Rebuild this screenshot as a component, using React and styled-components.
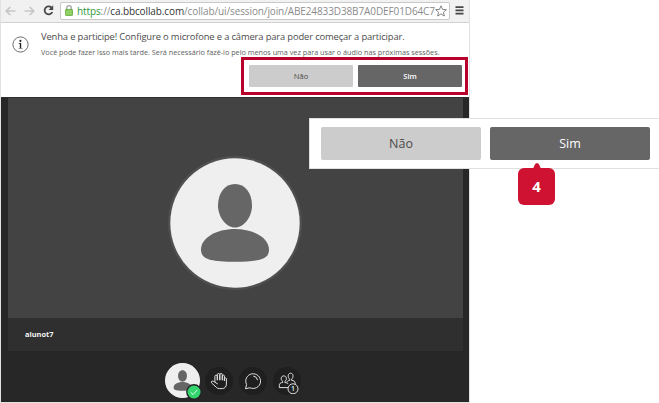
import React from 'react';
import styled, { createGlobalStyle } from 'styled-components';

const GlobalStyle = createGlobalStyle`
  * { box-sizing: border-box; }
  body {
    margin: 0;
    background: #fff;
    font-family: 'Open Sans', 'Noto Sans', sans-serif;
    overflow: hidden;
  }
  svg { display: block; flex: none; }
`;

const Page = styled.main`
  position: relative;
  width: 659px;
  height: 403px;
  overflow: hidden;
`;

const BrowserWindow = styled.section`
  display: flex;
  flex-direction: column;
  width: 470px;
  height: 403px;
  border: 1px solid #e2e2e2;
  border-top: 0;
`;

const Toolbar = styled.header`
  display: flex;
  align-items: center;
  height: 23px;
  padding: 0 5px 1px 4px;
  background: #f1f1f1;
  border-bottom: 1px solid #d2d2d2;
`;

const NavIcons = styled.div`
  display: flex;
  align-items: center;
  gap: 8px;
  width: 55px;
`;

const AddressBar = styled.div`
  display: flex;
  align-items: center;
  width: 390px;
  height: 18px;
  margin-right: 5px;
  padding: 0 2px 0 4px;
  background: #fff;
  border: 1px solid #c9c9c9;
  border-radius: 2px;
`;

const Url = styled.div`
  flex: 1;
  min-width: 0;
  margin-left: 4px;
  white-space: nowrap;
  font-size: 10px;
  line-height: 16px;
  letter-spacing: -0.11px;
  color: #8b8b8b;
`;

const Scheme = styled.span`
  color: #2d9a36;
`;

const Host = styled.span`
  color: #333;
`;

const Notice = styled.section`
  display: flex;
  height: 74px;
  padding-left: 11px;
  background: #fff;
`;

const NoticeIcon = styled.div`
  width: 29px;
  padding-top: 13px;
`;

const NoticeBody = styled.div`
  display: flex;
  flex: 1;
  flex-direction: column;
  white-space: nowrap;
`;

const NoticeTitle = styled.h1`
  margin: 7px 0 0;
  font-size: 9.4px;
  font-weight: 400;
  line-height: 14px;
  letter-spacing: -0.14px;
  color: #4c4c4c;
`;

const NoticeText = styled.p`
  margin: 3px 0 0;
  font-size: 7.25px;
  line-height: 10px;
  color: #5e5e5e;
`;

const HighlightFrame = styled.div`
  display: flex;
  align-self: flex-end;
  gap: 5px;
  width: 227px;
  height: 38px;
  margin-right: 1px;
  padding: 5px 3px 4px 5px;
  border: 3px solid #b9002b;
`;

const Choice = styled.button`
  flex: 1;
  height: ${(p) => (p.$large ? '33px' : '22px')};
  padding: 0;
  border: 0;
  border-radius: ${(p) => (p.$large ? '2px' : '1px')};
  background: ${(p) => (p.$primary ? '#666' : '#ccc')};
  color: ${(p) => (p.$primary ? '#fff' : '#4b4b4b')};
  font-family: inherit;
  font-size: ${(p) => (p.$large ? '12.5px' : '7.6px')};
  font-weight: ${(p) => (p.$large ? 400 : p.$primary ? 600 : 500)};
`;

const Stage = styled.section`
  display: flex;
  flex: 1;
  flex-direction: column;
  padding: 0 6px 0 7px;
  background: #272727;
  border-top: 1px solid #303030;
`;

const Video = styled.div`
  display: flex;
  justify-content: center;
  height: 220px;
  padding: 58px 1px 0 0;
  background: #434343;
`;

const Participant = styled.div`
  height: 33px;
  padding-left: 17px;
  background: #2f2f2f;
  color: #f4f4f4;
  font-size: 7.4px;
  font-weight: 700;
  line-height: 32px;
`;

const Controls = styled.nav`
  display: flex;
  align-items: center;
  padding: 12px 0 0 157px;
`;

const ProfileButton = styled.div`
  position: relative;
  width: 35px;
  height: 35px;
  margin-right: 5px;
`;

const StatusBadge = styled.span`
  position: absolute;
  right: -2px;
  bottom: -2px;
`;

const RoundButton = styled.div`
  display: grid;
  place-items: center;
  width: 28px;
  height: 28px;
  margin-right: 6px;
  border-radius: 50%;
  background: #1f1f1f;
`;

const Callout = styled.aside`
  position: absolute;
  top: 118px;
  left: 309px;
  display: flex;
  gap: 9px;
  width: 351px;
  height: 51px;
  padding: 8px 9px 8px 11px;
  background: #fff;
  border: 1px solid #e0e0e0;
`;

const StepMarker = styled.div`
  position: absolute;
  top: 163px;
  left: 518px;
  display: flex;
  flex-direction: column;
  align-items: center;
`;

const StepNumber = styled.div`
  width: 37px;
  height: 37px;
  margin-top: -1px;
  border-radius: 6px;
  background: #cf1231;
  color: #fff;
  font-size: 15px;
  font-weight: 700;
  line-height: 37px;
  text-align: center;
`;

const Arrow = ({ right }) => (
  <svg width="11" height="10" viewBox="0 0 11 10" fill="none" stroke="#c6c6c6" strokeWidth="1.7">
    <path d={right ? 'M0.5 5H9.5M5.7 1L9.8 5L5.7 9' : 'M10.5 5H1.5M5.3 1L1.2 5L5.3 9'} />
  </svg>
);

const Reload = () => (
  <svg width="11" height="11" viewBox="0 0 11 11">
    <path d="M8.4 2.5A4 4 0 1 0 9.3 7" fill="none" stroke="#484848" strokeWidth="1.8" />
    <path d="M10.2 0.3V5H5.5z" fill="#484848" />
  </svg>
);

const Lock = () => (
  <svg width="8" height="11" viewBox="0 0 8 11">
    <path d="M1.7 5V3A2.3 2.3 0 0 1 6.3 3V5" fill="none" stroke="#a4a4a4" strokeWidth="1.3" />
    <rect x="0.4" y="4.4" width="7.2" height="6.2" rx="0.8" fill="#85ca56" stroke="#60a83a" strokeWidth="0.8" />
    <path d="M1 6.6H7M1 8.5H7" stroke="#a4dc7d" strokeWidth="0.7" />
  </svg>
);

const Star = () => (
  <svg width="12" height="12" viewBox="0 0 12 12">
    <path
      d="M6 0.8L7.5 4.4L11.4 4.7L8.4 7.2L9.4 11L6 8.9L2.6 11L3.6 7.2L0.6 4.7L4.5 4.4Z"
      fill="#fff"
      stroke="#777"
      strokeWidth="0.9"
    />
  </svg>
);

const Menu = () => (
  <svg width="9" height="9" viewBox="0 0 9 9">
    <path d="M0.5 1.2H8.5M0.5 4.4H8.5M0.5 7.6H8.5" stroke="#454545" strokeWidth="1.8" />
  </svg>
);

const Info = () => (
  <svg width="17" height="17" viewBox="0 0 17 17">
    <circle cx="8.5" cy="8.5" r="7.6" fill="#fff" stroke="#4a4a4a" strokeWidth="0.8" />
    <circle cx="8.4" cy="4.9" r="1.05" fill="#222" />
    <path d="M6.8 7.1H9.2V12H10.5V12.6H6.7V12H7.8V7.7H6.8z" fill="#222" />
  </svg>
);

const Avatar = ({ size, ring }) => (
  <svg width={size} height={size} viewBox="0 0 134 134">
    <circle cx="67" cy="67" r="67" fill={ring ? '#505050' : '#efefef'} />
    <circle cx="67" cy="67" r="64.7" fill="#efefef" />
    <path d="M67 28C77 28 84 37 84 49.5C84 61 76 71.5 67 71.5C58 71.5 50 61 50 49.5C50 37 57 28 67 28Z" fill="#666" />
    <path d="M67 73C86 73 101 82 101 93.5C101 102 95 105.8 67 105.8C39 105.8 33 102 33 93.5C33 82 48 73 67 73Z" fill="#666" />
  </svg>
);

const Check = () => (
  <svg width="16" height="16" viewBox="0 0 16 16">
    <circle cx="8" cy="8" r="7.9" fill="#242424" />
    <circle cx="8" cy="8" r="6.5" fill="#34d56f" />
    <path d="M4.8 8.4L7 10.5L11.4 5.8" fill="none" stroke="#d8ffe4" strokeWidth="1" />
  </svg>
);

const Hand = () => (
  <svg width="18" height="18" viewBox="0 0 18 18" fill="none" stroke="#e1e1e1" strokeWidth="1" strokeLinecap="round" strokeLinejoin="round">
    <path d="M4.9 9.6V4.3C4.9 2.8 7.3 2.8 7.3 4.3V8.2V2.6C7.3 1.1 9.8 1.1 9.8 2.6V8.2V2.6C9.8 1.1 12.3 1.1 12.3 2.6V8.2V4.1C12.3 2.7 14.4 2.7 14.4 4.1V9V6.9C14.4 5.5 16.4 5.5 16.4 6.9V12.1C16.4 14.7 14.6 16.6 12.3 16.6H9.3C8 16.6 7.1 16.1 6.2 15.2L1.7 11C0.6 9.8 1.9 8.6 3.2 9.2L7.5 11.8" />
  </svg>
);

const Chat = () => (
  <svg width="18" height="18" viewBox="0 0 18 18" fill="none" stroke="#e1e1e1" strokeWidth="1" strokeLinecap="round" strokeLinejoin="round">
    <path d="M1.6 16.4L2.6 12.6A7.4 7.4 0 1 1 6.1 15.9Z" />
    <path d="M9.6 4.1A4.4 4.4 0 0 1 13.5 7.8" />
  </svg>
);

const People = () => (
  <svg width="24" height="26" viewBox="0 0 24 26" fill="none" stroke="#e1e1e1" strokeWidth="1">
    <path d="M12.1 14.3C12.1 13 13.2 12.6 14.7 12.3V11.1C12.4 9.2 12.8 5.2 15.6 5.2C18.4 5.2 18.9 9.2 16.6 11.1V12.3C18.9 12.5 20.2 13.5 20.2 15.5V17" />
    <path d="M13.2 19.6H4.3V17.6C4.3 15.4 5.6 14.6 7.7 14.5V13.4C5.3 11.6 5.8 7.9 8.8 7.9C11.8 7.9 12.3 11.6 9.9 13.4V14.5C11.6 14.7 12.6 15.1 13.2 16" />
    <circle cx="18" cy="20.8" r="5" fill="#242424" />
    <text x="18" y="23.3" textAnchor="middle" fill="#d8f0ff" stroke="none" fontFamily="Open Sans, sans-serif" fontSize="7" fontWeight="600">1</text>
  </svg>
);

const MarkerTip = () => (
  <svg width="10" height="6" viewBox="0 0 10 6">
    <path d="M0 6C2 5.3 2 3 2.9 1.5C3.9-0.3 6.1-0.3 7.1 1.5C8 3 8 5.3 10 6Z" fill="#cf1231" />
  </svg>
);

export default function App() {
  return (
    <>
      <GlobalStyle />
      <Page>
        <BrowserWindow>
          <Toolbar>
            <NavIcons>
              <Arrow />
              <Arrow right />
              <Reload />
            </NavIcons>
            <AddressBar>
              <Lock />
              <Url>
                <Scheme>https</Scheme>://<Host>ca.bbcollab.com</Host>/collab/ui/session/join/ABE24833D38B7A0DEF01D64C7
              </Url>
              <Star />
            </AddressBar>
            <Menu />
          </Toolbar>
          <Notice>
            <NoticeIcon><Info /></NoticeIcon>
            <NoticeBody>
              <NoticeTitle>Venha e participe! Configure o microfone e a câmera para poder começar a participar.</NoticeTitle>
              <NoticeText>Você pode fazer isso mais tarde. Será necessário fazê-lo pelo menos uma vez para usar o áudio nas próximas sessões.</NoticeText>
              <HighlightFrame>
                <Choice>Não</Choice>
                <Choice $primary>Sim</Choice>
              </HighlightFrame>
            </NoticeBody>
          </Notice>
          <Stage>
            <Video><Avatar size={134} ring /></Video>
            <Participant>alunot7</Participant>
            <Controls>
              <ProfileButton>
                <Avatar size={35} />
                <StatusBadge><Check /></StatusBadge>
              </ProfileButton>
              <RoundButton><Hand /></RoundButton>
              <RoundButton><Chat /></RoundButton>
              <RoundButton><People /></RoundButton>
            </Controls>
          </Stage>
        </BrowserWindow>
        <Callout>
          <Choice $large>Não</Choice>
          <Choice $large $primary>Sim</Choice>
        </Callout>
        <StepMarker>
          <MarkerTip />
          <StepNumber>4</StepNumber>
        </StepMarker>
      </Page>
    </>
  );
}
